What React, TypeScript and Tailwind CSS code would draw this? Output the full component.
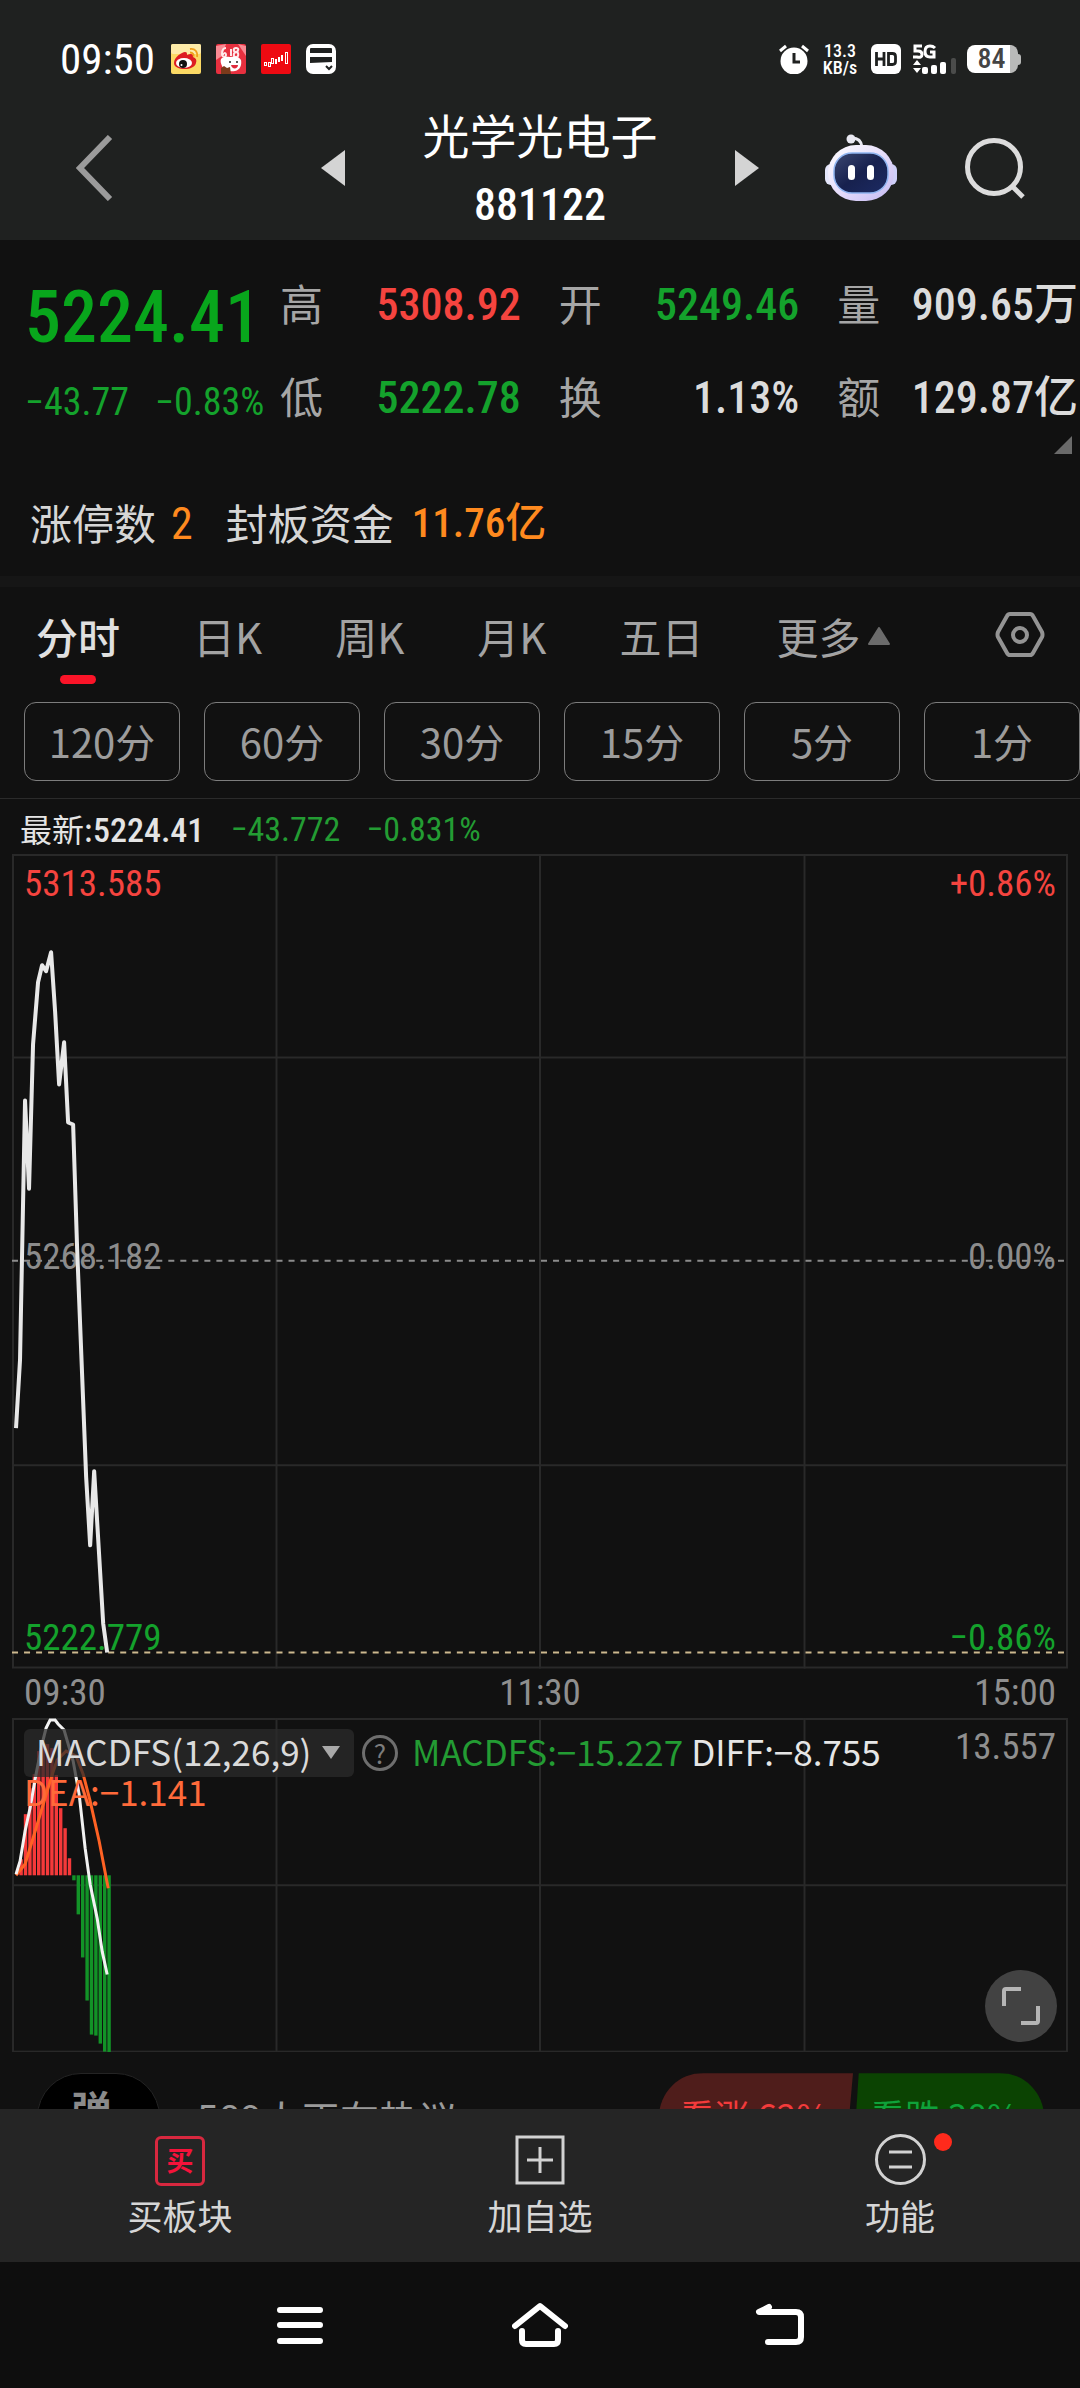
import { clsx } from 'clsx'

const SANS = "font-['Noto_Sans_CJK_SC',sans-serif]"
const NUM = "font-['Roboto_Condensed','Noto_Sans_CJK_SC',sans-serif]"

const GREEN = 'text-[#14a22c]'
const RED = 'text-[#f5443f]'
const LIGHT = 'text-[#dcdcdc]'

const QUOTES = [
  { label: '高', value: '5308.92', color: RED },
  { label: '开', value: '5249.46', color: GREEN },
  { label: '量', value: '909.65万', color: LIGHT },
  { label: '低', value: '5222.78', color: GREEN },
  { label: '换', value: '1.13%', color: LIGHT },
  { label: '额', value: '129.87亿', color: LIGHT },
]

const TABS = ['分时', '日K', '周K', '月K', '五日']
const MINUTES = ['120分', '60分', '30分', '15分', '5分', '1分']

const PRICE_LINE =
  '4,573 8,505 13,246 17,334 21,190 26,128 30,111 34,117 39,98 43,157 47,230 52,188 56,268 61,270 65,394 74,622 78,690 82,616 91,768 95,797'

const DIFF_LINE =
  '4,156 8,143 13,113 18,90 24,56 30,26 34,10 38,2 43,2 46,6 52,12 61,43 67,76 73,130 78,166 85,200 90,233 95,256'
const DEA_LINE =
  '4,157 13,146 21,120 30,90 39,60 45,42 54,33 64,38 71,56 78,83 87,123 96,170'

// bar heights, positive above the zero line
const MACD_BARS = [
  0, 16, 61, 87, 101, 124, 129, 131, 127, 100, 67, 47, 17, -5, -39, -82, -125,
  -159, -160, -168, -176, -177,
]
const ZERO = 157

function StatusBar() {
  return (
    <div className="flex h-[118px] items-center pl-[60px] pr-[59px] text-white">
      <span className={clsx(NUM, 'mr-[16px] text-[43px] leading-[40px]')}>09:50</span>
      <div className="flex gap-[15px]">
        <svg className="size-[30px]" viewBox="0 0 30 30">
          <rect width="30" height="30" rx="2" fill="#fbd964" />
          <rect width="30" height="10" rx="2" fill="#fdeba8" />
          <path d="M3 19c0-6 8-11 11-11 2 0 2 1 2 3 4-2 7-1 6 2 3 1 4 3 3 6-1 4-6 6-11 6-6 0-11-2-11-6z" fill="#dd1c22" />
          <ellipse cx="13" cy="19" rx="8" ry="5" fill="#fff" />
          <circle cx="12" cy="20" r="4" fill="#111" />
          <circle cx="10.500" cy="21" r="1" fill="#fff" />
          <path d="M19 5c5-1 8 3 7 8M19 8.500c3 0 4 2 3.500 4" stroke="#f0a01c" strokeWidth="1.800" fill="none" />
        </svg>
        <svg className="size-[30px]" viewBox="0 0 30 30">
          <rect width="30" height="30" rx="2" fill="#e7303f" />
          <path d="M0 2l10-2-4 12-6 4zM22 0l8 2v10z" fill="#f98a93" />
          <path d="M10 4c-3 0-4 3-4 6s4 4 4 1-3-2-3 0M15 5v7M20 4c-3 0-3 4 0 4s3 5 0 5-3-4 0-5 3-4 0-4" stroke="#ffe9ea" strokeWidth="2" fill="none" />
          <path d="M5 15c3-3 6-2 9-2 4-1 9-1 11 3 1 5-1 10-6 11-6 1-12-1-13-5-1-2-2-5-1-7z" fill="#fff" />
          <circle cx="14" cy="18" r="1" fill="#222" />
          <circle cx="21" cy="18" r="1" fill="#222" />
          <path d="M15 21h7c0 4-6 5-7 0z" fill="#e02a3c" />
          <path d="M5 24l3-2 3 2 3-1 1 7H5z" fill="#7b3a1b" />
        </svg>
        <svg className="size-[30px]" viewBox="0 0 30 30">
          <rect width="30" height="30" rx="2" fill="#ee0a12" />
          <g fill="none" stroke="#fff" strokeWidth="1">
            <rect x="3.500" y="18.500" width="2" height="3" />
            <rect x="7.500" y="18.500" width="2" height="4" />
            <rect x="10.500" y="14.500" width="2" height="5" />
            <rect x="14.500" y="15.500" width="1" height="4" />
            <rect x="17.500" y="13.500" width="1" height="4" />
            <rect x="20.500" y="11.500" width="1" height="5" />
            <rect x="24.500" y="8.500" width="2" height="11" />
          </g>
        </svg>
        <svg className="size-[30px]" viewBox="0 0 30 30">
          <rect width="30" height="30" rx="7" fill="#fff" />
          <path d="M5 4h20a1 1 0 0 1 1 1v4H4V5a1 1 0 0 1 1-1zM4 13h22v5L4 19z" fill="#1f2120" />
          <path d="M20 22l3 3 3-3" stroke="#1f2120" strokeWidth="2" fill="none" />
        </svg>
      </div>

      <div className="ml-auto flex items-center">
        <svg className="h-[30px] w-[30px]" viewBox="0 0 30 30">
          <circle cx="15" cy="17" r="13.500" fill="#fff" />
          <path d="M1 7l6-5M29 7l-6-5" stroke="#fff" strokeWidth="3" />
          <path d="M15 9v9h6" stroke="#1f2120" strokeWidth="3" fill="none" />
        </svg>
        <div className={clsx(NUM, 'ml-[12px] flex w-[38px] flex-col items-center text-[18px] font-medium leading-[17px]')}>
          <span>13.3</span>
          <span>KB/s</span>
        </div>
        <svg className="ml-[12px] size-[30px]" viewBox="0 0 30 30">
          <rect width="30" height="30" rx="6" fill="#fff" />
          <path d="M5.500 8v14M13 8v14M5.500 15H13M17.500 9.500h4q3 0 3 3v5q0 3-3 3h-4z" stroke="#1f2120" strokeWidth="2.800" fill="none" />
        </svg>
        <svg className="ml-[11px] h-[30px] w-[46px]" viewBox="0 0 46 30">
          <path d="M10 2H3v5h3q4 0 4 3.500T5 13H1M23 4q-2-2-5-2-5 0-5 5.500t5 5.500h4V8h-4" stroke="#fff" strokeWidth="3" fill="none" />
          <path d="M1 21l4-5 4 5zM1 24l4 5 4-5z" fill="#fff" />
          <rect x="10" y="23" width="6" height="7" rx="2" fill="#fff" />
          <rect x="19" y="21" width="6" height="9" rx="2" fill="#fff" />
          <rect x="28" y="18" width="6" height="12" rx="2" fill="#fff" />
          <rect x="39" y="14" width="5" height="16" rx="2" fill="#4b4c4b" />
        </svg>
        <div className="ml-[9px] flex items-center">
          <div className={clsx(NUM, 'flex h-[28px] w-[51px] items-center justify-center rounded-[8px] border-r-[8px] border-[#b9bab9] bg-white pl-[6px] text-[28px] font-medium leading-[28px] text-[#444]')}>
            84
          </div>
          <div className="h-[11px] w-[3px] rounded-r bg-[#b9bab9]" />
        </div>
      </div>
    </div>
  )
}

function Robot() {
  return (
    <svg className="h-[68px] w-[72px]" viewBox="0 0 72 68">
      <defs>
        <linearGradient id="shell" x1="0" y1="0" x2="1" y2="1">
          <stop offset="0" stopColor="#ffffff" />
          <stop offset="0.5" stopColor="#e6ddfb" />
          <stop offset="1" stopColor="#c3b9f2" />
        </linearGradient>
        <linearGradient id="visor" x1="0" y1="0" x2="1" y2="1">
          <stop offset="0" stopColor="#3c4770" />
          <stop offset="0.5" stopColor="#17214e" />
          <stop offset="1" stopColor="#1c2a63" />
        </linearGradient>
      </defs>
      <circle cx="26" cy="5" r="4.500" fill="#e9e9f2" />
      <path d="M27 4q9 0 10 9" stroke="#e9e9f2" strokeWidth="3" fill="none" />
      <rect x="0" y="30" width="12" height="21" rx="6" fill="#e4e6fb" />
      <rect x="60" y="30" width="12" height="21" rx="6" fill="#cfd0fa" />
      <rect x="3" y="11" width="66" height="56" rx="28" fill="url(#shell)" />
      <rect x="9" y="19" width="54" height="40" rx="18" fill="url(#visor)" stroke="#8fb4f0" strokeWidth="1.500" />
      <rect x="23" y="31" width="7" height="15" rx="3.500" fill="#fff" />
      <rect x="42" y="31" width="7" height="15" rx="3.500" fill="#fff" />
    </svg>
  )
}

function TitleBar() {
  return (
    <div className="grid h-[122px] grid-cols-[1fr_auto_1fr] items-start">
      <div className="flex h-[100px] items-center justify-between pl-[76px]">
        <button aria-label="返回">
          <svg className="h-[66px] w-[38px]" viewBox="0 0 38 66">
            <path d="M34 2L4 33l30 31" stroke="#9b9b9b" strokeWidth="6" fill="none" />
          </svg>
        </button>
        <button aria-label="上一个">
          <svg className="h-[36px] w-[24px]" viewBox="0 0 24 36">
            <path d="M24 0v36L0 18z" fill="#d4d4d4" />
          </svg>
        </button>
      </div>
      <div className="flex w-[390px] flex-col items-center text-white">
        <h1 className={clsx(SANS, '-mt-[8px] text-[47px] leading-[48px]')}>光学光电子</h1>
        <p className={clsx(NUM, 'mt-[27px] text-[44px] font-medium leading-[40px]')}>881122</p>
      </div>
      <div className="flex h-[100px] items-center pr-[53px]">
        <button aria-label="下一个">
          <svg className="h-[36px] w-[24px]" viewBox="0 0 24 36">
            <path d="M0 0v36l24-18z" fill="#d4d4d4" />
          </svg>
        </button>
        <button aria-label="智能助手" className="ml-auto">
          <Robot />
        </button>
        <button aria-label="搜索" className="ml-[68px]">
          <svg className="size-[62px]" viewBox="0 0 62 62">
            <circle cx="29" cy="30" r="26.500" stroke="#dcdcdc" strokeWidth="5" fill="none" />
            <path d="M47 49l11 11" stroke="#dcdcdc" strokeWidth="5" />
          </svg>
        </button>
      </div>
    </div>
  )
}

function Quote() {
  return (
    <section>
      <div className="flex pr-[2px] pt-[32px]">
        <div className={clsx(NUM, 'w-[280px] shrink-0 whitespace-nowrap pl-[25px]')}>
          <p className="mt-[14px] text-[72px] font-medium leading-[64px] text-[#08a61c]">5224.41</p>
          <p className={clsx(GREEN, 'mt-[32px] flex gap-[26px] text-[38px] leading-[40px]')}>
            <span>−43.77</span>
            <span>−0.83%</span>
          </p>
        </div>
        <dl className="grid flex-1 grid-cols-3 gap-x-[38px] gap-y-[29px]">
          {QUOTES.map((q) => (
            <div key={q.label} className="flex h-[64px] items-center justify-between whitespace-nowrap">
              <dt className={clsx(SANS, 'pb-[4px] text-[43px] leading-[60px] text-[#a6a6a6]')}>{q.label}</dt>
              <dd className={clsx(NUM, q.color, 'pt-[2px] text-[44px] font-medium leading-[62px]')}>{q.value}</dd>
            </div>
          ))}
        </dl>
      </div>
      <div className="mt-[7px] flex justify-end pr-2">
        <svg className="size-[18px]" viewBox="0 0 18 18">
          <path d="M18 0v18H0z" fill="#6a6a6a" />
        </svg>
      </div>
      <div className={clsx(SANS, 'mb-[22px] mt-[34px] flex h-[66px] items-center pl-[30px] text-[42px] text-[#d6d6d6]')}>
        <span>涨停数</span>
        <span className={clsx(NUM, 'ml-[15px] pt-[6px] text-[44px] text-[#ff8a1f]')}>2</span>
        <span className="ml-[33px]">封板资金</span>
        <span className={clsx(NUM, 'ml-[18px] pt-[6px] text-[41px] font-medium text-[#ff8a1f]')}>11.76亿</span>
      </div>
      <div className="h-[11px] bg-[#161616]" />
    </section>
  )
}

function PeriodTabs() {
  return (
    <nav className={clsx(SANS, 'border-b border-[#2b2b2b] pb-[17px]')}>
      <div className="flex h-[115px] items-start gap-[73px] whitespace-nowrap pl-[36px] pr-[35px] pt-[24px] text-[42px] leading-[50px] text-[#a3a3a3]">
        {TABS.map((t, i) => (
          <button key={t} className={clsx('flex flex-col items-center', i === 0 && 'font-medium text-[#e0e0e0]')}>
            {t}
            {i === 0 && <span className="mt-[14px] h-[9px] w-[36px] rounded-full bg-[#fb1428]" />}
          </button>
        ))}
        <button className="flex items-center gap-[8px]">
          更多
          <svg className="h-[18px] w-[22px]" viewBox="0 0 22 18">
            <path d="M11 1l10 16H1z" fill="#6b6b6b" stroke="#6b6b6b" strokeWidth="2" strokeLinejoin="round" />
          </svg>
        </button>
        <button aria-label="设置" className="ml-auto">
          <svg className="h-[48px] w-[50px]" viewBox="0 0 50 48">
            <path d="M15 3h20q2 0 3 2l9 16q1 3 0 5l-9 16q-1 2-3 2H15q-2 0-3-2L3 26q-1-2 0-5l9-16q1-2 3-2z" stroke="#949494" strokeWidth="4" fill="none" />
            <circle cx="25" cy="24" r="7" stroke="#949494" strokeWidth="4" fill="none" />
          </svg>
        </button>
      </div>
      <div className="flex gap-[24px] pl-[24px]">
        {MINUTES.map((m) => (
          <button
            key={m}
            className="h-[79px] flex-1 whitespace-nowrap rounded-[12px] border border-[#7d7d7d] pb-[2px] text-[40px] leading-[60px] text-[#9c9c9c]"
          >
            {m}
          </button>
        ))}
      </div>
    </nav>
  )
}

function Grid({ height, rows }: { height: number; rows: number[] }) {
  return (
    <g stroke="#292929" strokeWidth="2" fill="none">
      <rect x="1" y="1" width="1052" height={height - 2} />
      {[264, 527, 791].map((x) => (
        <line key={x} x1={x} x2={x} y1="0" y2={height} />
      ))}
      {rows.map((y) => (
        <line key={y} x1="0" x2="1054" y1={y} y2={y} />
      ))}
    </g>
  )
}

function PriceChart() {
  return (
    <section className={clsx(NUM, 'mx-[12px] text-[37px] leading-[40px]')}>
      <div className="flex h-[55px] items-center gap-[26px] pl-[8px] pt-[4px] text-[34px]">
        <span className="font-medium text-[#e4e4e4]">
          <span className={clsx(SANS, 'text-[32px] font-normal')}>最新:</span>5224.41
        </span>
        <span className="text-[#239c33]">−43.772</span>
        <span className="text-[#239c33]">−0.831%</span>
      </div>
      <div className="relative">
        <svg className="block w-full" viewBox="0 0 1054 813">
          <Grid height={813} rows={[203, 610]} />
          <line x1="0" x2="1054" y1="406" y2="406" stroke="#8c8c8c" strokeWidth="2" strokeDasharray="6 6" />
          <line x1="0" x2="1054" y1="797" y2="797" stroke="#cdb98f" strokeWidth="2" strokeDasharray="6 6" />
        </svg>
        <span className={clsx(RED, 'absolute left-[12px] top-[10px]')}>5313.585</span>
        <span className={clsx(RED, 'absolute right-[12px] top-[10px]')}>+0.86%</span>
        <span className="absolute left-[12px] top-[383px] text-[#8c8c8c]">5268.182</span>
        <span className="absolute right-[12px] top-[383px] text-[#8c8c8c]">0.00%</span>
        <span className={clsx(GREEN, 'absolute left-[12px] top-[764px]')}>5222.779</span>
        <span className={clsx(GREEN, 'absolute right-[12px] top-[764px]')}>−0.86%</span>
        <svg className="absolute inset-0 w-full" viewBox="0 0 1054 813">
          <polyline points={PRICE_LINE} stroke="#e8e8e8" strokeWidth="4" strokeLinejoin="round" fill="none" />
        </svg>
      </div>
      <div className="flex h-[49px] justify-between px-[12px] pt-[4px] text-[#8f8f8f]">
        <span>09:30</span>
        <span>11:30</span>
        <span>15:00</span>
      </div>
    </section>
  )
}

function MacdChart() {
  return (
    <section className={clsx(SANS, 'relative mx-[12px] whitespace-nowrap text-[35px] leading-[40px]')}>
      <svg className="block w-full" viewBox="0 0 1054 334">
        <Grid height={334} rows={[167]} />
        {MACD_BARS.map((h, i) => (
          <rect
            key={i}
            x={3 + i * 4.39}
            y={h > 0 ? ZERO - h : ZERO}
            width="3.400"
            height={Math.abs(h)}
            fill={h > 0 ? '#f5393a' : '#129327'}
          />
        ))}
        <polyline points={DEA_LINE} stroke="#ff6224" strokeWidth="3" fill="none" />
        <polyline points={DIFF_LINE} stroke="#f2f2f2" strokeWidth="3" fill="none" />
      </svg>
      <div className="absolute left-[12px] right-[12px] top-[11px] flex h-[48px] items-center">
        <button className="flex h-[48px] w-[330px] items-center justify-between rounded-[6px] bg-[#2b2b2b]/75 pl-[12px] pr-[14px] text-[#dadada]">
          <span className="-mt-[4px]">MACDFS(12,26,9)</span>
          <svg className="h-[13px] w-[18px]" viewBox="0 0 18 13">
            <path d="M0 0h18l-9 13z" fill="#a9a9a9" />
          </svg>
        </button>
        <button
          aria-label="指标说明"
          className="ml-[8px] flex size-[36px] items-center justify-center rounded-full border-[3px] border-[#6e6e6e] text-[26px] leading-[28px] text-[#7c7c7c]"
        >
          ?
        </button>
        <span className="-mt-[4px] ml-[14px] text-[#239c33]">MACDFS:−15.227</span>
        <span className="-mt-[4px] ml-[8px] text-[#e6e6e6]">DIFF:−8.755</span>
        <span className={clsx(NUM, '-mt-[12px] ml-auto text-[37px] text-[#8f8f8f]')}>13.557</span>
      </div>
      <span className="absolute left-[12px] top-[53px] text-[#ff6a3a]">DEA:−1.141</span>
      <button
        aria-label="全屏"
        className="absolute bottom-[10px] right-[11px] flex size-[72px] items-center justify-center rounded-full bg-[#424242]"
      >
        <svg className="size-[38px]" viewBox="0 0 38 38">
          <path d="M2 19V4q0-2 2-2h15M36 19v15q0 2-2 2H19" stroke="#b5b5b5" strokeWidth="4" fill="none" />
        </svg>
      </button>
    </section>
  )
}

function Discussion() {
  return (
    <div className={clsx(SANS, 'mt-[21px] flex items-center whitespace-nowrap pl-[37px] pr-[36px] text-[39px]')}>
      <span className="flex h-[88px] w-[123px] items-center justify-center rounded-[44px] border border-[#242424] bg-black pb-[18px] pr-[14px] text-[40px] font-bold leading-[40px] text-[#8a8a8a]">
        弹
      </span>
      <span className="ml-[37px] text-[#9a9a9a]">589人正在热议</span>
      <div className="ml-auto flex h-[88px] text-[35px] leading-[40px]">
        <button className="w-[194px] rounded-l-[44px] bg-[#4f1d1b] pb-[4px] pr-[4px] text-[#f33b3b] [clip-path:polygon(0_0,100%_0,96%_100%,0_100%)]">
          看涨 62%
        </button>
        <button className="w-[191px] rounded-r-[44px] bg-[#0b4302] pb-[4px] pr-[8px] text-[#0fa23a] [clip-path:polygon(3%_0,100%_0,100%_100%,0_100%)]">
          看跌 38%
        </button>
      </div>
    </div>
  )
}

function BottomBar() {
  return (
    <footer>
      <div className={clsx(SANS, 'grid h-[153px] grid-cols-3 bg-[#252525] text-[35px] leading-[40px] text-[#d6d6d6]')}>
        <button className="flex flex-col items-center pt-[27px]">
          <span className="flex size-[50px] items-center justify-center rounded-[6px] border-[3px] border-[#d8283f] pb-[2px] text-[27px] font-bold leading-[30px] text-[#f5133a]">
            买
          </span>
          <span className="mt-[9px]">买板块</span>
        </button>
        <button className="flex flex-col items-center pt-[26px]">
          <svg className="size-[50px]" viewBox="0 0 50 50">
            <path d="M2 2h46v46H2zM25 12v26M12 25h26" stroke="#d2d2d2" strokeWidth="3" fill="none" />
          </svg>
          <span className="mt-[10px]">加自选</span>
        </button>
        <button className="flex flex-col items-center pt-[25px]">
          <span className="relative">
            <svg className="size-[51px]" viewBox="0 0 51 51">
              <circle cx="25.500" cy="25.500" r="24" stroke="#d2d2d2" strokeWidth="3" fill="none" />
              <path d="M14 18h23M14 33h23" stroke="#d2d2d2" strokeWidth="3" />
            </svg>
            <span className="absolute -right-[26px] -top-[1px] size-[18px] rounded-full bg-[#ff2a1c]" />
          </span>
          <span className="mt-[10px]">功能</span>
        </button>
      </div>
      <div className="flex h-[126px] items-center justify-center gap-[184px] bg-[#0e0e0e]">
        <button aria-label="最近任务">
          <svg className="h-[46px] w-[56px]" viewBox="0 0 56 46">
            <path d="M8 8h40M8 23h40M8 39h40" stroke="#fff" strokeWidth="6" strokeLinecap="round" />
          </svg>
        </button>
        <button aria-label="主屏幕">
          <svg className="h-[46px] w-[56px]" viewBox="0 0 56 46">
            <path d="M3 24L28 4l25 20M10 29v9q0 4 4 4h28q4 0 4-4v-9" stroke="#fff" strokeWidth="6" strokeLinecap="round" strokeLinejoin="round" fill="none" />
          </svg>
        </button>
        <button aria-label="后退">
          <svg className="h-[46px] w-[56px]" viewBox="0 0 56 46">
            <path d="M17 5L7 10h37q5 0 5 5v20q0 5-5 5H16" stroke="#fff" strokeWidth="6" strokeLinecap="round" strokeLinejoin="round" fill="none" />
          </svg>
        </button>
      </div>
    </footer>
  )
}

export default function App() {
  return (
    <div className={clsx(SANS, 'flex h-screen flex-col overflow-hidden bg-[#111]')}>
      <header className="shrink-0 bg-[#1f2120]">
        <StatusBar />
        <TitleBar />
      </header>
      <main className="min-h-0 flex-1 overflow-hidden">
        <Quote />
        <PeriodTabs />
        <PriceChart />
        <MacdChart />
        <Discussion />
      </main>
      <BottomBar />
    </div>
  )
}
